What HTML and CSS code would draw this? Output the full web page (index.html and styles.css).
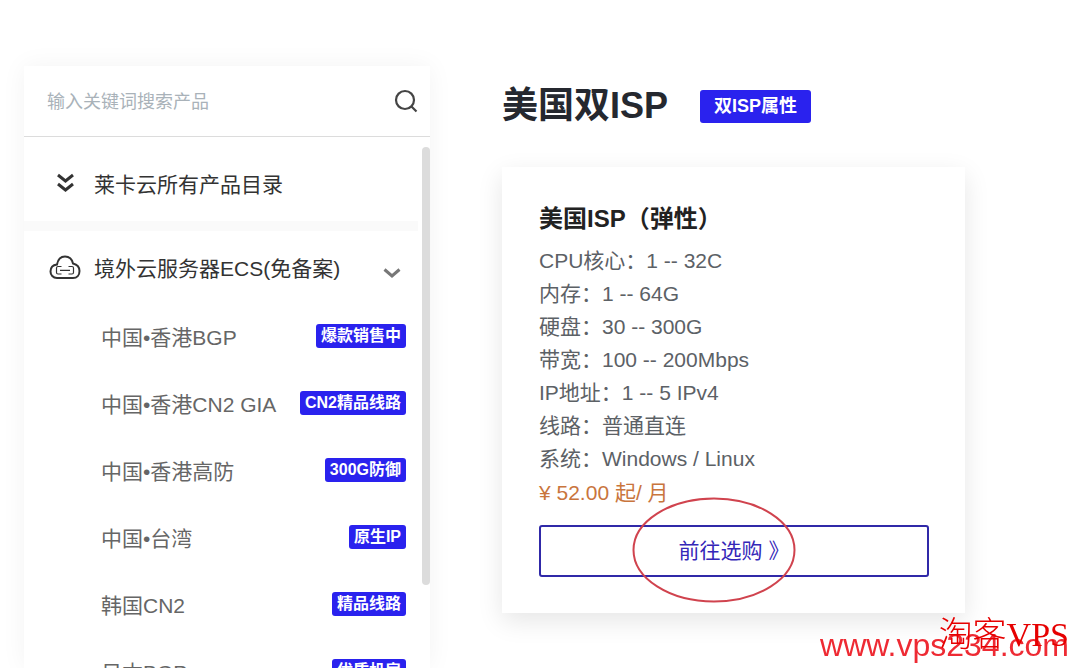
FILE: index.html
```
<!DOCTYPE html>
<html lang="zh-CN">
<head>
    <meta charset="UTF-8">
    <meta name="viewport" content="width=device-width, initial-scale=1.0">
    <title>美国双ISP</title>
    <link rel="stylesheet" href="styles.css">
</head>
<body>
    <div class="page">
        <aside class="sidebar">
            <form class="search">
                <input type="text" placeholder="输入关键词搜索产品" aria-label="搜索产品">
                <button type="submit" aria-label="搜索">
                    <svg width="24" height="24" viewBox="0 0 24 24" fill="none" stroke="#444" stroke-width="2.2">
                        <circle cx="11" cy="11" r="9"/>
                        <path d="M17 17L22.500 22.500"/>
                    </svg>
                </button>
            </form>

            <div class="catalog">
                <nav class="menu">
                    <a href="#" class="menu-all">
                        <svg class="menu-icon" width="32" height="26" viewBox="0 0 32 26" fill="none" stroke="#333" stroke-width="3">
                            <path d="M9 5l7.500 6 7.500-6M9 14l7.500 6 7.500-6"/>
                        </svg>
                        <span>莱卡云所有产品目录</span>
                    </a>

                    <button type="button" class="menu-group">
                        <svg class="menu-icon" width="32" height="26" viewBox="0 0 32 26" fill="none" stroke="#333" stroke-width="2">
                            <path d="M8 24C4 24 1.500 21 1.500 17.500C1.500 13.500 4 11 8 10.500C9 5 12 2.500 16 2.500C20 2.500 23 5 24 9.500C28 10.500 30.500 13.500 30.500 17C30.500 21 28 24 24 24Z"/>
                            <path stroke-width="1.200" d="M12.500 12.500H9Q7.500 12.500 7.500 14V18.500Q7.500 20 9 20H12.500M19.500 12.500H23Q24.500 12.500 24.500 14V18.500Q24.500 20 23 20H19.500M11 16.300H21"/>
                        </svg>
                        <span>境外云服务器ECS(免备案)</span>
                        <svg class="arrow" width="18" height="12" viewBox="0 0 18 12" fill="none" stroke="#777" stroke-width="3">
                            <path d="M1.500 2.500l7.500 6.500 7.500-6.500"/>
                        </svg>
                    </button>

                    <ul class="menu-list">
                        <li><a href="#">中国•香港BGP <span class="tag">爆款销售中</span></a></li>
                        <li><a href="#">中国•香港CN2 GIA <span class="tag">CN2精品线路</span></a></li>
                        <li><a href="#">中国•香港高防 <span class="tag">300G防御</span></a></li>
                        <li><a href="#">中国•台湾 <span class="tag">原生IP</span></a></li>
                        <li><a href="#">韩国CN2 <span class="tag">精品线路</span></a></li>
                        <li><a href="#">日本BGP <span class="tag">优质机房</span></a></li>
                    </ul>
                </nav>
                <div class="scrollbar"></div>
            </div>
        </aside>

        <main class="content">
            <div class="heading">
                <h1>美国双ISP</h1>
                <span class="badge">双ISP属性</span>
            </div>

            <section class="card">
                <h2>美国ISP（弹性）</h2>
                <ul class="specs">
                    <li>CPU核心：1 -- 32C</li>
                    <li>内存：1 -- 64G</li>
                    <li>硬盘：30 -- 300G</li>
                    <li>带宽：100 -- 200Mbps</li>
                    <li>IP地址：1 -- 5 IPv4</li>
                    <li>线路：普通直连</li>
                    <li>系统：Windows / Linux</li>
                </ul>
                <p class="price">¥ 52.00 起/ 月</p>
                <a href="#" class="buy">前往选购 》
                    <svg class="circle" width="164" height="106" viewBox="0 0 164 106" fill="none" stroke="#d0434e" stroke-width="2">
                        <ellipse cx="82" cy="53" rx="80.500" ry="51.500"/>
                    </svg>
                </a>
            </section>
        </main>
    </div>

    <div class="watermark">
        <span class="watermark-url">www.vps234.com</span>
        <span class="watermark-name">淘客VPS</span>
    </div>
</body>
</html>
```
FILE: styles.css
```
* {
    box-sizing: border-box;
}

body {
    font-family: "Liberation Sans", "Noto Sans CJK SC", sans-serif;
    font-size: 21px;
    background-color: #fff;
    color: #333;
    margin: 0;
    height: 100vh;
    overflow: hidden;
}

a {
    color: inherit;
    text-decoration: none;
}

ul {
    list-style: none;
    margin: 0;
    padding: 0;
}

.page {
    display: flex;
    align-items: flex-start;
    gap: 72px;
    height: 100%;
    padding: 66px 24px 0;
}

/* Sidebar */
.sidebar {
    display: flex;
    flex-direction: column;
    flex: 0 0 406px;
    height: 100%;
    background-color: #fff;
    box-shadow: 0 0 24px rgba(0, 0, 0, 0.05);
}

.search {
    display: flex;
    align-items: center;
    flex: none;
    height: 71px;
    padding: 0 12px 0 23px;
    border-bottom: 1px solid #dcdcdc;
}

.search input {
    flex: 1;
    min-width: 0;
    border: none;
    outline: none;
    padding: 3px 0 0;
    background: none;
    font-family: inherit;
    font-size: 18px;
}

.search input::placeholder {
    color: #a9b2b9;
}

.search button {
    display: flex;
    padding: 0;
    border: none;
    background: none;
    cursor: pointer;
}

.catalog {
    display: flex;
    flex: 1;
    min-height: 0;
    padding-top: 10px;
}

.menu {
    flex: 1;
    overflow: hidden;
}

.scrollbar {
    width: 8px;
    height: 84%;
    margin-left: 4px;
    border-radius: 4px;
    background-color: #dcdcdc;
}

.menu-all,
.menu-group {
    display: flex;
    align-items: center;
    width: 100%;
    height: 72px;
    padding: 0 17px 0 25px;
}

.menu-all {
    height: 84px;
    padding-bottom: 2px;
    border-bottom: 10px solid #fafafa;
}

.menu-group {
    border: none;
    background: none;
    color: inherit;
    font: inherit;
    cursor: pointer;
}

.menu-icon {
    flex: none;
    margin-right: 13px;
}

.arrow {
    margin-left: auto;
    margin-top: 12px;
}

.menu-list a {
    display: flex;
    align-items: center;
    justify-content: space-between;
    height: 67px;
    padding: 0 12px 2px 77px;
    color: #666;
    white-space: nowrap;
}

.tag,
.badge {
    border-radius: 3px;
    background-color: #2a22ee;
    color: #fff;
    font-weight: bold;
    white-space: nowrap;
}

.tag {
    padding: 0 5px;
    font-size: 16px;
    line-height: 24px;
}

/* Product */
.content {
    flex: 1;
    max-width: 463px;
    padding-top: 16px;
}

.heading {
    display: flex;
    align-items: center;
    gap: 32px;
    margin-bottom: 37px;
}

.heading h1 {
    margin: 0;
    font-size: 36px;
    line-height: 48px;
    color: #25282f;
}

.badge {
    padding: 0 14px;
    font-size: 18px;
    line-height: 33px;
}

.card {
    padding: 36px 36px 36px 37px;
    background-color: #fff;
    box-shadow: 0 8px 24px rgba(0, 0, 0, 0.1);
}

.card h2 {
    margin: 0 0 9px;
    font-size: 24px;
    line-height: 32px;
    color: #222;
}

.specs {
    color: #5c6166;
    line-height: 33px;
}

.price {
    margin: 1px 0 16px;
    line-height: 33px;
    color: #c9753d;
}

.buy {
    position: relative;
    display: block;
    border: 2px solid #3029a8;
    border-radius: 3px;
    color: #3427b8;
    line-height: 48px;
    text-align: center;
}

/* Hand-drawn mark over the button */
.circle {
    position: absolute;
    top: -30px;
    left: 50%;
    margin-left: -102px;
    pointer-events: none;
}

/* Watermark */
.watermark {
    position: fixed;
    right: 11px;
    bottom: 0;
    line-height: 38px;
    color: #ee2a33;
    pointer-events: none;
}

.watermark-url {
    font-size: 32px;
}

.watermark-name {
    position: absolute;
    right: 0;
    bottom: 14px;
    font-family: "Liberation Serif", "Noto Sans CJK SC", serif;
    font-size: 34px;
    font-weight: 300;
    color: #e60000;
    white-space: nowrap;
}
```
